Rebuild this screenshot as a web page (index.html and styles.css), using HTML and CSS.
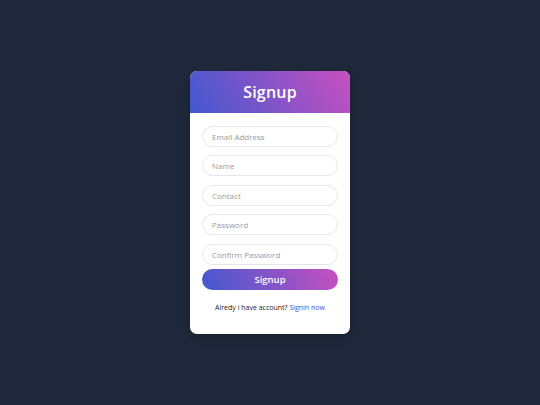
FILE: index.html
```html
<!DOCTYPE html>
<html>
<head>
<meta charset="utf-8">
<link rel="stylesheet" href="styles.css">
</head>
<body>
<div class="page">
  <div class="card">
    <div class="card-header">Signup</div>
    <form class="card-body">
      <input class="field" type="text" placeholder="Email Address">
      <input class="field" type="text" placeholder="Name">
      <input class="field" type="text" placeholder="Contact">
      <input class="field" type="password" placeholder="Password">
      <input class="field" type="password" placeholder="Confirm Password">
      <button class="btn" type="button">Signup</button>
      <p class="footer">Alredy i have account? <a href="#" class="link">Signin now</a></p>
    </form>
  </div>
</div>
</body>
</html>
```
FILE: styles.css
```css
html, body {
  margin: 0;
  padding: 0;
}
body {
  background: #1f293b;
  font-family: "Open Sans", "Liberation Sans", sans-serif;
  width: 540px;
  height: 405px;
}
.page {
  display: flex;
  justify-content: center;
  padding-top: 71px;
}
.card {
  width: 160px;
  background: #fff;
  border-radius: 7px;
  overflow: hidden;
  box-shadow: 0 4px 12px rgba(0,0,0,0.25);
}
.card-header {
  height: 42px;
  display: flex;
  align-items: center;
  justify-content: center;
  color: #fff;
  font-weight: 600;
  font-size: 16px;
  letter-spacing: 0.2px;
  background: linear-gradient(60deg, #4158d0, #c850c0);
}
.card-body {
  margin: 0;
  padding: 12.5px 12px 0 12px;
  height: 208px;
  display: flex;
  flex-direction: column;
}
.field {
  box-sizing: border-box;
  height: 21px;
  width: 100%;
  margin: 0 0 8.5px 0;
  border: 1px solid #e6e6e6;
  border-radius: 11px;
  padding: 0 9px;
  font-family: inherit;
  font-size: 8px;
  color: #333;
  outline: none;
}
.field:last-of-type {
  margin-bottom: 4.5px;
}
.field::placeholder {
  color: #9a9a9a;
}
.btn {
  height: 21px;
  width: 100%;
  border: none;
  border-radius: 11px;
  color: #fff;
  font-family: inherit;
  font-size: 9.5px;
  font-weight: 600;
  background: linear-gradient(60deg, #4158d0, #c850c0);
  padding: 0;
}
.footer {
  margin: 13px 0 0 0;
  text-align: center;
  font-size: 7px;
  color: #1a1a1a;
}
.link {
  color: #4158d0;
  text-decoration: none;
}
```
